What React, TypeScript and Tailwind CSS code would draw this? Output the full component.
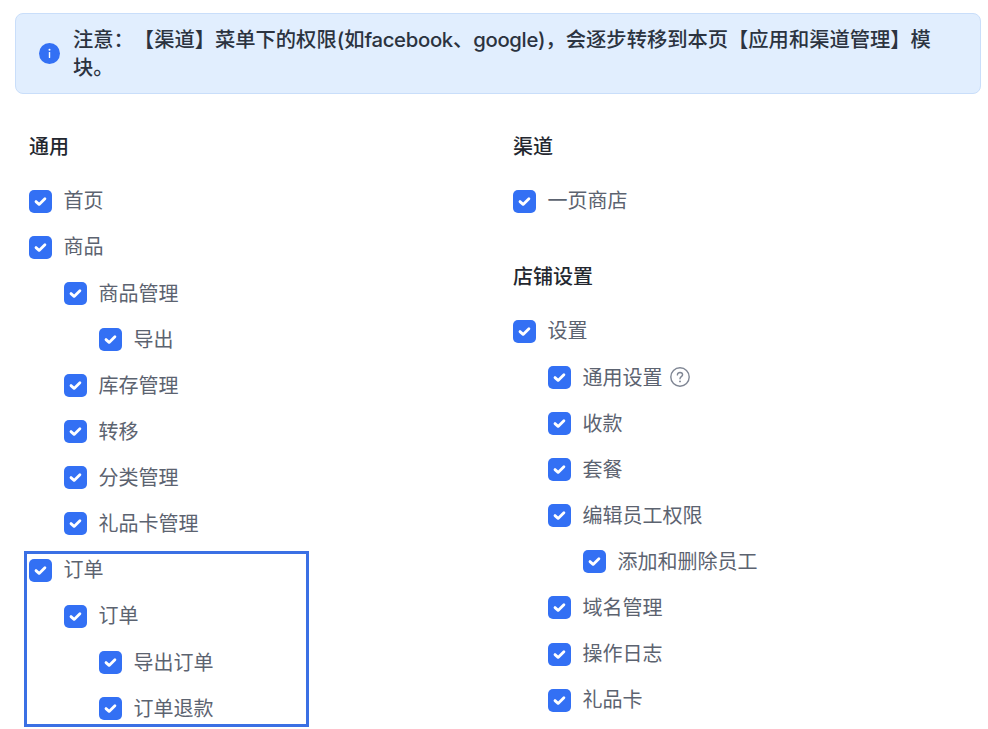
import React from "react"

const font = { fontFamily: '"Inter", "Noto Sans CJK SC", sans-serif' }

type Item = { label: string; level?: number; help?: boolean }

const general: Item[] = [
  { label: "首页" },
  { label: "商品" },
  { label: "商品管理", level: 1 },
  { label: "导出", level: 2 },
  { label: "库存管理", level: 1 },
  { label: "转移", level: 1 },
  { label: "分类管理", level: 1 },
  { label: "礼品卡管理", level: 1 },
]

const orders: Item[] = [
  { label: "订单" },
  { label: "订单", level: 1 },
  { label: "导出订单", level: 2 },
  { label: "订单退款", level: 2 },
]

const settings: Item[] = [
  { label: "设置" },
  { label: "通用设置", level: 1, help: true },
  { label: "收款", level: 1 },
  { label: "套餐", level: 1 },
  { label: "编辑员工权限", level: 1 },
  { label: "添加和删除员工", level: 2 },
  { label: "域名管理", level: 1 },
  { label: "操作日志", level: 1 },
  { label: "礼品卡", level: 1 },
]

function CheckBox() {
  return (
    <span className="flex h-[23px] w-[23px] shrink-0 items-center justify-center rounded-[5px] bg-[#3370f4]">
      <svg width="15" height="15" viewBox="0 0 15 15" fill="none">
        <path d="M3 7.6 L6.1 10.4 L11.9 4.7" stroke="#fff" strokeWidth="2.8" strokeLinecap="round" strokeLinejoin="round" />
      </svg>
    </span>
  )
}

function Row({ label, level = 0, help }: Item) {
  const indent = level === 2 ? "pl-[70px]" : level === 1 ? "pl-[35px]" : "pl-0"
  return (
    <div className={`flex h-[46.13px] items-center ${indent}`}>
      <CheckBox />
      <span className="ml-[11.5px] pt-[0.5px] text-[20px] leading-[28px] text-[#5c6370]">{label}</span>
      {help && (
        <svg className="ml-[6px]" width="22" height="22" viewBox="0 0 22 22" fill="none">
          <circle cx="11" cy="11" r="9.2" stroke="#7f8694" strokeWidth="1.4" />
          <path d="M8.4 8.9 C8.4 7.4 9.6 6.5 11 6.5 C12.5 6.5 13.6 7.4 13.6 8.8 C13.6 10.6 11 10.7 11 12.7" stroke="#7f8694" strokeWidth="1.4" strokeLinecap="round" />
          <circle cx="11" cy="15.4" r="0.95" fill="#7f8694" />
        </svg>
      )}
    </div>
  )
}

function Heading({ children, className = "" }: { children: React.ReactNode; className?: string }) {
  return <h3 className={`mb-[17px] pt-[1px] text-[20px] font-medium leading-[28px] text-[#23272f] ${className}`}>{children}</h3>
}

export default function App() {
  return (
    <div className="h-[729px] w-[988px] overflow-hidden bg-white pt-[13px]" style={font}>
      <div className="ml-[15px] mr-[7px] flex h-[81px] items-center rounded-[8px] border border-[#c9defa] bg-[#e1eefe] pl-[23px] pr-[40px]">
        <span className="flex h-[21px] w-[21px] shrink-0 items-center justify-center rounded-full bg-[#3370f4]">
          <svg width="21" height="21" viewBox="0 0 21 21" fill="none">
            <circle cx="10.5" cy="6.8" r="1" fill="#fff" />
            <rect x="9.8" y="9" width="1.4" height="6" rx="0.5" fill="#fff" />
          </svg>
        </span>
        <p className="ml-[13px] text-[20.3px] font-medium leading-[28px] text-[#2b3340] [text-spacing-trim:space-all]">
          注意：【渠道】菜单下的权限(如<span className="tracking-[-0.3px]">facebook</span>、<span className="tracking-[-0.3px]">google</span>)，会逐步转移到本页【应用和渠道管理】模块。
        </p>
      </div>

      <div className="grid grid-cols-[484px_1fr] pl-[29px] pt-[38px]">
        <div>
          <Heading>通用</Heading>
          {general.map((item) => (
            <Row key={item.label} {...item} />
          ))}
          <div className="relative">
            {orders.map((item) => (
              <Row key={item.label + item.level} {...item} />
            ))}
            <div className="pointer-events-none absolute bottom-[5px] left-[-5px] top-[4px] w-[285px] border-[3px] border-[#3b70e4]" />
          </div>
        </div>
        <div>
          <Heading>渠道</Heading>
          <Row label="一页商店" />
          <Heading className="mt-[38px]">店铺设置</Heading>
          {settings.map((item) => (
            <Row key={item.label} {...item} />
          ))}
        </div>
      </div>
    </div>
  )
}
